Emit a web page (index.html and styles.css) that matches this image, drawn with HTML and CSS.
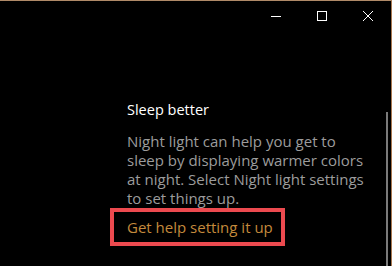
FILE: index.html
```html
<!DOCTYPE html>
<html lang="en">
<head>
    <meta charset="UTF-8">
    <title>Night light</title>
    <link rel="stylesheet" href="styles.css">
</head>
<body>
    <div class="window">
        <div class="titlebar">
            <button class="caption-btn" aria-label="Minimize">
                <svg width="10" height="10" viewBox="0 0 10 10"><path d="M0 5.5h10" stroke="#fff" stroke-width="1"/></svg>
            </button>
            <button class="caption-btn" aria-label="Maximize">
                <svg width="10" height="10" viewBox="0 0 10 10"><rect x="0.5" y="0.5" width="9" height="9" fill="none" stroke="#fff" stroke-width="1"/></svg>
            </button>
            <button class="caption-btn" aria-label="Close">
                <svg width="10" height="10" viewBox="0 0 10 10"><path d="M0 0L10 10M10 0L0 10" stroke="#fff" stroke-width="1"/></svg>
            </button>
        </div>

        <div class="body">
            <div class="content">
                <h3 class="tip-title">Sleep better</h3>
                <p class="tip-text">Night light can help you get to sleep by displaying warmer colors at night. Select Night light settings to set things up.</p>
                <div class="highlight">
                    <a href="#" class="tip-link">Get help setting it up</a>
                </div>
            </div>
            <div class="scrollbar"></div>
        </div>
    </div>
</body>
</html>
```

FILE: styles.css
```css
html, body {
    margin: 0;
    padding: 0;
    background-color: #000;
}

body {
    font-family: "Open Sans", "Noto Sans", sans-serif;
    width: 392px;
    height: 266px;
    overflow: hidden;
}

.window {
    height: 265px;
    border-top: 1px solid #b08a68;
    border-right: 1px solid #a87850;
    display: flex;
    flex-direction: column;
}

.titlebar {
    height: 31px;
    display: flex;
    justify-content: flex-end;
}

.caption-btn {
    width: 46px;
    height: 30px;
    background: none;
    border: none;
    padding: 0;
    display: flex;
    align-items: center;
    justify-content: center;
}

.body {
    flex: 1;
    display: flex;
}

.content {
    flex: 1;
    padding: 68px 0 0 127px;
}

.tip-title {
    margin: 0;
    color: #fff;
    font-size: 14.5px;
    font-weight: normal;
    line-height: 20px;
}

.tip-text {
    margin: 12px 0 0;
    color: #9c9c9c;
    font-size: 15px;
    line-height: 19px;
    width: 240px;
}

.highlight {
    box-sizing: border-box;
    width: 175px;
    height: 38px;
    margin: 0 0 0 -17px;
    border: 4px solid #ec4a4f;
    display: flex;
    align-items: center;
    padding-left: 13px;
}

.tip-link {
    color: #c48a3c;
    text-decoration: none;
    font-size: 15px;
}

.scrollbar {
    width: 2px;
    margin: 80px 3px 0 0;
    background-color: #7a7a7a;
}
```
